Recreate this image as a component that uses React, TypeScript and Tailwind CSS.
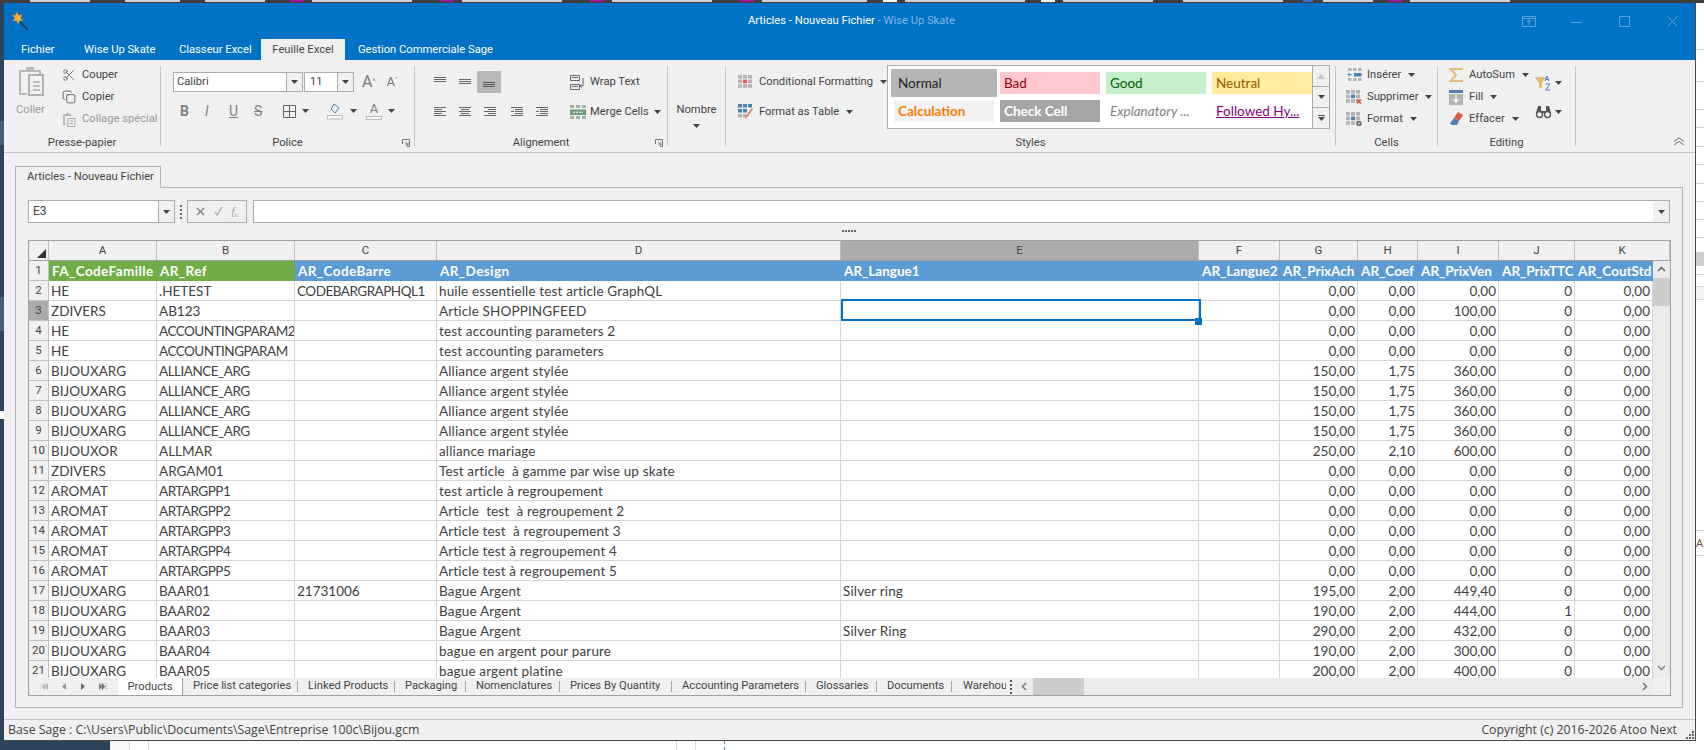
import { Copy, Scissors } from "lucide-react";
import type { ReactNode } from "react";

const ui = "font-['Roboto',sans-serif]";
const cellFont = "font-['Lato',sans-serif]";

const colsHead = "grid grid-cols-[20px_108px_138px_142px_404px_358px_81px_78px_60px_81px_76px_95px]";
const colsBody = "grid grid-cols-[20px_108px_138px_142px_404px_358px_81px_78px_60px_81px_76px_78px]";

const columnLetters = ["A", "B", "C", "D", "E", "F", "G", "H", "I", "J", "K"];
const fieldNames = [
  "FA_CodeFamille", "AR_Ref", "AR_CodeBarre", "AR_Design", "AR_Langue1", "AR_Langue2",
  "AR_PrixAch", "AR_Coef", "AR_PrixVen", "AR_PrixTTC", "AR_CoutStd",
];

const rows = [
  ["HE", ".HETEST", "CODEBARGRAPHQL1", "huile essentielle test article GraphQL", "", "", "0,00", "0,00", "0,00", "0", "0,00"],
  ["ZDIVERS", "AB123", "", "Article SHOPPINGFEED", "", "", "0,00", "0,00", "100,00", "0", "0,00"],
  ["HE", "ACCOUNTINGPARAM2", "", "test accounting parameters 2", "", "", "0,00", "0,00", "0,00", "0", "0,00"],
  ["HE", "ACCOUNTINGPARAM", "", "test accounting parameters", "", "", "0,00", "0,00", "0,00", "0", "0,00"],
  ["BIJOUXARG", "ALLIANCE_ARG", "", "Alliance argent stylée", "", "", "150,00", "1,75", "360,00", "0", "0,00"],
  ["BIJOUXARG", "ALLIANCE_ARG", "", "Alliance argent stylée", "", "", "150,00", "1,75", "360,00", "0", "0,00"],
  ["BIJOUXARG", "ALLIANCE_ARG", "", "Alliance argent stylée", "", "", "150,00", "1,75", "360,00", "0", "0,00"],
  ["BIJOUXARG", "ALLIANCE_ARG", "", "Alliance argent stylée", "", "", "150,00", "1,75", "360,00", "0", "0,00"],
  ["BIJOUXOR", "ALLMAR", "", "alliance mariage", "", "", "250,00", "2,10", "600,00", "0", "0,00"],
  ["ZDIVERS", "ARGAM01", "", "Test article  à gamme par wise up skate", "", "", "0,00", "0,00", "0,00", "0", "0,00"],
  ["AROMAT", "ARTARGPP1", "", "test article à regroupement", "", "", "0,00", "0,00", "0,00", "0", "0,00"],
  ["AROMAT", "ARTARGPP2", "", "Article  test  à regroupement 2", "", "", "0,00", "0,00", "0,00", "0", "0,00"],
  ["AROMAT", "ARTARGPP3", "", "Article test  à regroupement 3", "", "", "0,00", "0,00", "0,00", "0", "0,00"],
  ["AROMAT", "ARTARGPP4", "", "Article test à regroupement 4", "", "", "0,00", "0,00", "0,00", "0", "0,00"],
  ["AROMAT", "ARTARGPP5", "", "Article test à regroupement 5", "", "", "0,00", "0,00", "0,00", "0", "0,00"],
  ["BIJOUXARG", "BAAR01", "21731006", "Bague Argent", "Silver ring", "", "195,00", "2,00", "449,40", "0", "0,00"],
  ["BIJOUXARG", "BAAR02", "", "Bague Argent", "", "", "190,00", "2,00", "444,00", "1", "0,00"],
  ["BIJOUXARG", "BAAR03", "", "Bague Argent", "Silver Ring", "", "290,00", "2,00", "432,00", "0", "0,00"],
  ["BIJOUXARG", "BAAR04", "", "bague en argent pour parure", "", "", "190,00", "2,00", "300,00", "0", "0,00"],
  ["BIJOUXARG", "BAAR05", "", "bague argent platine", "", "", "200,00", "2,00", "400,00", "0", "0,00"],
];

const sheetTabs = [
  { name: "Price list categories", w: "w-[115px]" },
  { name: "Linked Products", w: "w-[97px]" },
  { name: "Packaging", w: "w-[71px]" },
  { name: "Nomenclatures", w: "w-[94px]" },
  { name: "Prices By Quantity", w: "w-[112px]" },
  { name: "Accounting Parameters", w: "w-[134px]" },
  { name: "Glossaries", w: "w-[71px]" },
  { name: "Documents", w: "w-[75px]" },
];

// bits of the windows behind the app, peeking out round the edges
const taskbarBits = [
  { x: "ml-[30px] w-[60px] bg-[#cfcfcf]" },
  { x: "ml-[35px] w-[55px] bg-[#cfcfcf]" },
  { x: "ml-[25px] w-[60px] bg-[#cfcfcf]" },
  { x: "ml-[25px] w-[14px] bg-[#a01a9a]" },
  { x: "ml-[8px] w-[100px] bg-[#cfcfcf]" },
  { x: "ml-[28px] w-[14px] bg-[#a01a9a]" },
  { x: "ml-[8px] w-[100px] bg-[#cfcfcf]" },
  { x: "ml-[28px] w-[14px] bg-[#a01a9a]" },
  { x: "ml-[8px] w-[100px] bg-[#cfcfcf]" },
  { x: "ml-[28px] w-[14px] bg-[#a01a9a]" },
  { x: "ml-[8px] w-[105px] bg-[#cfcfcf]" },
  { x: "ml-[16px] w-[14px] bg-white" },
  { x: "ml-[8px] w-[120px] bg-[#cfcfcf]" },
  { x: "ml-[16px] w-[14px] bg-white" },
  { x: "ml-[8px] w-[90px] bg-[#cfcfcf]" },
  { x: "ml-[30px] w-[100px] bg-[#cfcfcf]" },
  { x: "ml-[20px] w-[10px] bg-[#3a6fd8]" },
  { x: "ml-[10px] w-[50px] bg-[#cfcfcf]" },
  { x: "ml-[15px] w-[14px] bg-[#a01a9a]" },
  { x: "ml-[8px] w-[100px] bg-[#cfcfcf]" },
];

const sideLines = ["h-[47px]", "h-[32px]", "h-[28px]", "h-[18px]", "h-[19px]", "h-[18px]", "h-[19px]", "h-[18px]", "h-[18px]", "h-[18px]"];

function Caret({ className = "" }: { className?: string }) {
  return (
    <svg width="7" height="4" viewBox="0 0 7 4" className={`shrink-0 ${className}`}>
      <path d="M0 0h7L3.5 4z" fill="#444" />
    </svg>
  );
}

function Lines({ rows, active }: { rows: number[][]; active?: boolean }) {
  return (
    <svg width="14" height="14" viewBox="0 0 14 14">
      {rows.map(([y, x1, x2], i) => (
        <rect key={i} x={x1} y={y} width={x2 - x1} height="1" fill={active ? "#555" : "#666"} />
      ))}
    </svg>
  );
}

function GridIcon({ tint, extra }: { tint: string; extra?: ReactNode }) {
  const cells = [0, 1, 2].flatMap((r) => [0, 1, 2].map((c) => [r, c]));
  return (
    <svg width="16" height="14" viewBox="0 0 16 14" className="shrink-0">
      {cells.map(([r, c]) => (
        <rect key={`${r}${c}`} x={c * 5} y={r * 4.6} width="4" height="3.6" fill={r === 1 && c === 1 ? tint : "#b3b3b3"} />
      ))}
      {extra}
    </svg>
  );
}

function SmallBtn({ icon, label, caret, muted }: { icon: ReactNode; label: string; caret?: boolean; muted?: boolean }) {
  return (
    <div className={`flex h-[18px] items-center gap-[5px] whitespace-nowrap ${muted ? "text-[#9a9a9a]" : "text-[#444]"}`}>
      <span className="flex w-[16px] shrink-0 justify-center">{icon}</span>
      <span>{label}</span>
      {caret && <Caret className="ml-[2px]" />}
    </div>
  );
}

function Group({ w, label, launcher, children }: { w: string; label: string; launcher?: boolean; children: ReactNode }) {
  return (
    <div className={`relative h-[80px] shrink-0 border-r border-[#c6c6c6] ${w}`}>
      <div className="flex h-[70px]">{children}</div>
      <div className="h-[14px] text-center leading-[14px] whitespace-nowrap text-[#444]">{label}</div>
      {launcher && (
        <svg width="8" height="8" viewBox="0 0 8 8" className="absolute right-[4px] bottom-[-1px]">
          <path d="M0.5 5V0.5H7.5V7.5H5M3 3l3 3M6 3.5V6H3.5" fill="none" stroke="#777" />
        </svg>
      )}
    </div>
  );
}

function WindowButtons() {
  return (
    <div className="flex items-center text-[#5ca4dc]">
      <svg width="14" height="11" viewBox="0 0 14 11" className="mr-[35px]">
        <path d="M.5.5h13v10H.5zM.5 2.5h13M7 9V4M4.8 6 7 3.8 9.2 6" fill="none" stroke="currentColor" />
      </svg>
      <svg width="11" height="11" viewBox="0 0 11 11" className="mr-[37px]">
        <path d="M0 6.5h11" stroke="currentColor" />
      </svg>
      <svg width="11" height="11" viewBox="0 0 11 11" className="mr-[37px]">
        <path d="M.5.5h10v10H.5z" fill="none" stroke="currentColor" />
      </svg>
      <svg width="11" height="11" viewBox="0 0 11 11">
        <path d="M.5.5l10 10M10.5.5l-10 10" stroke="currentColor" />
      </svg>
    </div>
  );
}

function Ribbon() {
  return (
    <div className={`relative flex h-[93px] shrink-0 border-b border-[#c6c6c6] bg-[#f0f0f0] pt-[6px] text-[11.2px] ${ui}`}>
      <Group w="w-[157px]" label="Presse-papier">
        <div className="flex w-[57px] shrink-0 flex-col pl-[14px] text-[#9a9a9a]">
          <svg width="28" height="30" viewBox="0 0 28 30">
            <path d="M1 4h7V1h8v3h7v5h-2V6H3v21h6v2H1z" fill="#b8b8b8" />
            <path d="M11 9h14v20H11z" fill="#f0f0f0" stroke="#b0b0b0" strokeWidth="2" />
            <path d="M15 16h7M15 20h7M15 24h7" stroke="#b0b0b0" strokeWidth="1.5" />
          </svg>
          <span className="mt-[6px] -ml-[2px]">Coller</span>
        </div>
        <div className="flex flex-col gap-[4px]">
          <SmallBtn icon={<Scissors size={14} strokeWidth={1.3} color="#555" />} label="Couper" />
          <SmallBtn icon={<Copy size={14} strokeWidth={1.3} color="#444" />} label="Copier" />
          <SmallBtn
            muted
            label="Collage spécial"
            icon={
              <svg width="14" height="15" viewBox="0 0 14 15">
                <path d="M1 2h3V1h3v1h2v2H3v8h2v1H1z" fill="#bbb" />
                <path d="M6 6.5h7v8H6zM8 9h3M8 11.5h3" fill="none" stroke="#aaa" />
              </svg>
            }
          />
        </div>
      </Group>

      <Group w="w-[254px]" label="Police" launcher>
        <div className="flex flex-col pt-[6px] pl-[12px]">
          <div className="flex h-[20px] items-center">
            <div className="flex h-full w-[130px] border border-[#ababab]">
              <span className="flex-1 bg-white pl-[3px] leading-[18px] text-[#444]">Calibri</span>
              <span className="flex w-[16px] items-center justify-center border-l border-[#ababab]"><Caret /></span>
            </div>
            <div className="ml-[1px] flex h-full w-[50px] border border-[#ababab]">
              <span className="flex-1 bg-white pl-[5px] leading-[18px] text-[#444]">11</span>
              <span className="flex w-[16px] items-center justify-center border-l border-[#ababab]"><Caret /></span>
            </div>
            <span className="ml-[8px] text-[16px] text-[#777]">A<sup className="text-[7px] text-[#4a86c5]">^</sup></span>
            <span className="ml-[11px] text-[13px] text-[#777]">A<sup className="text-[7px] text-[#4a86c5]">ˇ</sup></span>
          </div>
          <div className="mt-[9px] flex h-[20px] items-center text-[14px] text-[#808080]">
            <span className="ml-[7px] w-[25px] font-bold">B</span>
            <span className="w-[24px] italic">I</span>
            <span className="w-[25px] underline">U</span>
            <span className="w-[29px] line-through">S</span>
            <svg width="13" height="13" viewBox="0 0 13 13">
              <path d="M.5.5h12v12H.5zM6.5.5v12M.5 6.5h12" fill="none" stroke="#666" />
            </svg>
            <Caret className="ml-[6px]" />
            <svg width="16" height="17" viewBox="0 0 16 17" className="ml-[18px]">
              <path d="M7 1l5 4-4 5-4-4z" fill="#e8eef6" stroke="#5a7fa8" />
              <rect x=".5" y="12.5" width="15" height="3.5" fill="#f6f6f6" stroke="#bbb" />
            </svg>
            <Caret className="ml-[7px]" />
            <span className="relative ml-[9px] flex h-[18px] w-[16px] flex-col items-center text-[13px] leading-[13px]">
              A
              <span className="absolute bottom-0 h-[4px] w-full border border-[#bbb] bg-[#f6f6f6]" />
            </span>
            <Caret className="ml-[6px]" />
          </div>
        </div>
      </Group>

      <Group w="w-[253px]" label="Alignement" launcher>
        <div className="flex w-[155px] shrink-0 flex-col pt-[5px] pl-[12px]">
          <div className="flex h-[22px] items-center">
            <span className="flex w-[25px] justify-center"><Lines rows={[[2, 1, 13], [4, 1, 13], [6, 1, 13]]} /></span>
            <span className="flex w-[25px] justify-center"><Lines rows={[[4, 1, 13], [6, 1, 13], [8, 1, 13]]} /></span>
            <span className="flex h-[22px] w-[24px] items-center justify-center bg-[#b8b8b8]"><Lines active rows={[[7, 1, 13], [9, 1, 13], [11, 1, 13]]} /></span>
          </div>
          <div className="mt-[8px] flex h-[22px] items-center">
            <span className="flex w-[25px] justify-center"><Lines rows={[[2, 1, 13], [4, 1, 9], [6, 1, 13], [8, 1, 9], [10, 1, 13]]} /></span>
            <span className="flex w-[25px] justify-center"><Lines rows={[[2, 1, 13], [4, 3, 11], [6, 1, 13], [8, 3, 11], [10, 1, 13]]} /></span>
            <span className="flex w-[25px] justify-center"><Lines rows={[[2, 1, 13], [4, 5, 13], [6, 1, 13], [8, 5, 13], [10, 1, 13]]} /></span>
            <span className="flex w-[30px] justify-center"><Lines rows={[[2, 1, 13], [4, 5, 13], [6, 1, 4], [6, 5, 13], [8, 5, 13], [10, 1, 13]]} /></span>
            <span className="flex w-[20px] justify-center"><Lines rows={[[2, 1, 13], [4, 5, 13], [6, 1, 4], [6, 5, 13], [8, 5, 13], [10, 1, 13]]} /></span>
          </div>
        </div>
        <div className="flex flex-col pt-[7px] text-[#444]">
          <div className="flex h-[18px] items-center gap-[5px] whitespace-nowrap">
            <svg width="15" height="17" viewBox="0 0 15 17">
              <path d="M.5 1.5h9v5h-9zM.5 10.5h9v5h-9zM2 3.5h6M2 12.5h6M13 4v8l-3 0M11.5 10.5 10 12l1.5 1.5" fill="none" stroke="#666" />
            </svg>
            Wrap Text
          </div>
          <div className="mt-[12px] flex h-[18px] items-center gap-[3px] whitespace-nowrap">
            <svg width="17" height="15" viewBox="0 0 17 15">
              <path d="M0 0h4v3H0zM6 0h4v3H6zM12 0h4v3h-4zM0 11h4v3H0zM6 11h4v3H6zM12 11h4v3h-4z" fill="#9db5a3" />
              <rect y="4.5" width="16" height="5.5" fill="#6d9c7c" />
              <path d="M3 7.2h10" stroke="#fff" strokeDasharray="2 1" />
            </svg>
            Merge Cells
            <Caret className="ml-[2px]" />
          </div>
        </div>
      </Group>

      <Group w="w-[58px]" label="">
        <div className="flex w-full flex-col items-center pt-[36px] text-[#444]">
          <span>Nombre</span>
          <Caret className="mt-[5px]" />
        </div>
      </Group>

      <Group w="w-[610px]" label="Styles">
        <div className="flex w-[161px] shrink-0 flex-col pt-[7px] pl-[12px] text-[#444]">
          <div className="flex h-[18px] items-center gap-[5px] whitespace-nowrap">
            <GridIcon tint="#e0633f" />
            Conditional Formatting
            <Caret className="ml-[2px]" />
          </div>
          <div className="mt-[12px] flex h-[18px] items-center gap-[5px] whitespace-nowrap">
            <svg width="16" height="16" viewBox="0 0 16 16" className="shrink-0">
              <path d="M0 0h4v3.5H0zM5 0h4v3.5H5zM10 0h4v3.5h-4zM0 5h4v3.5H0zM5 5h4v3.5H5z" fill="#4a7fb8" />
              <path d="M0 10h4v3.5H0zM5 10h3v3.5H5z" fill="#b3b3b3" />
              <path d="M15 5 9 13l-2 2 1-3 6-8z" fill="#e0633f" />
            </svg>
            Format as Table
            <Caret className="ml-[2px]" />
          </div>
        </div>
        <div className={`-mt-[1px] flex h-[64px] w-[443px] shrink-0 border border-[#ababab] bg-white ${cellFont} text-[13.5px]`}>
          <div className="grid flex-1 grid-cols-[100px_100px_100px_100px] grid-rows-[22px_22px] content-start gap-x-[6px] gap-y-[6px] pt-[6px] pl-[6px] leading-[22px]">
            <span className="bg-[#b5b5b5] pl-[4px] text-[#222] outline-[3px] outline-[#b5b5b5]">Normal</span>
            <span className="bg-[#ffc7ce] pl-[4px] text-[#9c0006]">Bad</span>
            <span className="bg-[#c6efce] pl-[4px] text-[#006100]">Good</span>
            <span className="bg-[#ffeb9c] pl-[4px] text-[#9c5700]">Neutral</span>
            <span className="bg-[#f2f2f2] pl-[4px] font-bold text-[#fa7d00]">Calculation</span>
            <span className="bg-[#a5a5a5] pl-[4px] font-bold text-white">Check Cell</span>
            <span className="pl-[4px] text-[#7f7f7f] italic">Explanatory ...</span>
            <span className="pl-[4px] text-[#800080] underline">Followed Hy...</span>
          </div>
          <div className="flex w-[17px] shrink-0 flex-col border-l border-[#ababab] bg-[#f0f0f0]">
            <span className="flex h-[21px] items-center justify-center border-b border-[#ababab]">
              <svg width="8" height="5" viewBox="0 0 8 5"><path d="M0 5h8L4 0z" fill="#c4c4c4" /></svg>
            </span>
            <span className="flex h-[21px] items-center justify-center border-b border-[#ababab]"><Caret /></span>
            <span className="flex flex-1 flex-col items-center justify-center gap-[1px]">
              <span className="h-[1px] w-[7px] bg-[#555]" />
              <Caret />
            </span>
          </div>
        </div>
      </Group>

      <Group w="w-[102px]" label="Cells">
        <div className="flex flex-col gap-[4px] pl-[10px]">
          <SmallBtn
            caret
            label="Insérer"
            icon={
              <svg width="15" height="14" viewBox="0 0 15 14">
                <path d="M1 0h3.500v3H1zM6 0h3.500v3H6zM11 0h3.500v3H11zM1 10h3.500v3H1zM6 10h3.500v3H6zM11 10h3.500v3H11z" fill="#b3b3b3" />
                <path d="M7 5h7.500v3.500H7z" fill="#4a7fb8" />
                <path d="M1 6.700h4M2.700 5 1 6.700l1.700 1.700" fill="none" stroke="#4a7fb8" />
              </svg>
            }
          />
          <SmallBtn caret label="Supprimer" icon={<GridIcon tint="#4a7fb8" extra={<path d="M11 9.500l4 4M15 9.500l-4 4" stroke="#e0533f" strokeWidth="1.600" />} />} />
          <SmallBtn caret label="Format" icon={<GridIcon tint="#4a7fb8" extra={<circle cx="13" cy="11.500" r="2" fill="none" stroke="#666" strokeWidth="1.400" />} />} />
        </div>
      </Group>

      <Group w="w-[138px]" label="Editing">
        <div className="flex w-[97px] shrink-0 flex-col gap-[4px] pl-[10px]">
          <SmallBtn
            caret
            label="AutoSum"
            icon={<svg width="14" height="14" viewBox="0 0 14 14"><path d="M13 2V1H1.500L7 7l-5.500 6H13v-1" fill="none" stroke="#e9b872" strokeWidth="2" /></svg>}
          />
          <SmallBtn
            caret
            label="Fill"
            icon={
              <svg width="14" height="15" viewBox="0 0 14 15">
                <path d="M0 0h14v3H0z" fill="#4a7fb8" />
                <path d="M0 4h14v11H0z" fill="#b3b3b3" />
                <path d="M7 5v7M4.500 9.500 7 12l2.500-2.500" fill="none" stroke="#fff" strokeWidth="1.300" />
              </svg>
            }
          />
          <SmallBtn
            caret
            label="Effacer"
            icon={
              <svg width="15" height="14" viewBox="0 0 15 14">
                <path d="M9 0l5 3-4 6-5-3z" fill="#e0533f" />
                <path d="M5 6l5 3-2 4H3L1 11z" fill="#4a7fb8" />
              </svg>
            }
          />
        </div>
        <div className="flex flex-col pt-[8px]">
          <div className="flex h-[18px] items-center gap-[3px]">
            <svg width="17" height="17" viewBox="0 0 17 17">
              <path d="M0 2h11L7 8v6L4 12V8z" fill="#e9b872" />
              <path d="M10 6l2-5 2 5M11 4.500h2.500M10.500 9h4.500l-4.500 6H15" fill="none" stroke="#4a7fb8" />
            </svg>
            <Caret />
          </div>
          <div className="mt-[12px] flex h-[16px] items-center gap-[3px]">
            <svg width="17" height="14" viewBox="0 0 17 14">
              <path d="M3 1h3v5h5V1h3l2 7H1z" fill="#555" />
              <circle cx="4.500" cy="9.500" r="3" fill="#f0f0f0" stroke="#555" strokeWidth="1.400" />
              <circle cx="12.500" cy="9.500" r="3" fill="#f0f0f0" stroke="#555" strokeWidth="1.400" />
            </svg>
            <Caret />
          </div>
        </div>
      </Group>

      <svg width="12" height="9" viewBox="0 0 12 9" className="absolute top-[77px] right-[10px]">
        <path d="M1 4.500 6 1l5 3.500M1 8 6 4.500 11 8" fill="none" stroke="#666" />
      </svg>
    </div>
  );
}

function FormulaBar() {
  return (
    <div className={`flex h-[23px] items-stretch pl-[12px] text-[12px] text-[#444] ${ui}`}>
      <div className="flex w-[147px] border border-[#ababab] bg-white">
        <span className="flex-1 pl-[4px] leading-[21px]">E3</span>
        <span className="flex w-[16px] items-center justify-center border-l border-[#ababab] bg-[#f0f0f0]"><Caret /></span>
      </div>
      <div className="flex w-[12px] flex-col items-center justify-center gap-[2px]">
        <span className="size-[2px] bg-[#666]" />
        <span className="size-[2px] bg-[#666]" />
        <span className="size-[2px] bg-[#666]" />
        <span className="size-[2px] bg-[#666]" />
      </div>
      <div className="flex w-[60px] items-center justify-around border border-[#ababab] bg-[#f0f0f0] px-[4px] text-[#9a9a9a]">
        <svg width="9" height="9" viewBox="0 0 9 9"><path d="M1 1l7 7M8 1 1 8" stroke="#8e8e8e" strokeWidth="1.700" /></svg>
        <svg width="9" height="9" viewBox="0 0 9 9"><path d="M1 5l2 3 5-8" fill="none" stroke="#aaa" strokeWidth="1.300" /></svg>
        <span className="font-['Liberation_Serif',serif] text-[11px] italic">f<sub className="text-[7px]">x</sub></span>
      </div>
      <div className="ml-[6px] flex w-[1417px] border border-[#ababab] bg-white">
        <span className="flex-1" />
        <span className="flex w-[16px] items-center justify-center bg-[#f0f0f0]"><Caret /></span>
      </div>
    </div>
  );
}

function Sheet() {
  return (
    <div className="ml-[12px] flex h-[456px] w-[1643px] flex-col border border-[#a0a0a0] bg-white">
      <div className={`${colsHead} h-[20px] shrink-0 border-b border-[#a0a0a0] bg-[#f0f0f0] text-center text-[11.5px] leading-[19px] text-[#444] ${ui}`}>
        <div className="relative border-r border-[#c0c0c0]">
          <svg width="9" height="9" viewBox="0 0 9 9" className="absolute right-[2px] bottom-[2px]"><path d="M9 0v9H0z" fill="#333" /></svg>
        </div>
        {columnLetters.map((c) => (
          <div key={c} className={`border-r border-[#c0c0c0] ${c === "E" ? "bg-[#ababab]" : ""}`}>{c}</div>
        ))}
      </div>

      <div className="flex min-h-0 flex-1">
        <div className={`relative min-w-0 flex-1 overflow-hidden text-[13.5px] leading-[21px] text-[#404040] ${cellFont}`}>
          <div className={`${colsBody} h-[20px]`}>
            <div className={`border-r border-b border-[#c0c0c0] bg-[#f0f0f0] text-center text-[11.5px] leading-[19px] text-[#444] ${ui}`}>1</div>
            {fieldNames.map((f, i) => (
              <div key={f} className={`overflow-hidden pl-[3px] font-bold whitespace-nowrap text-white ${i < 2 ? "bg-[#70ad47]" : "bg-[#5b9bd5]"} ${i < 4 ? "tracking-[0.4px]" : ""}`}>{f}</div>
            ))}
          </div>
          {rows.map((row, r) => (
            <div key={r} className={`${colsBody} h-[20px]`}>
              <div className={`border-r border-b border-[#c0c0c0] text-center text-[11.5px] leading-[19px] text-[#444] ${ui} ${r === 1 ? "bg-[#ababab]" : "bg-[#f0f0f0]"}`}>{r + 2}</div>
              {row.map((v, c) => (
                <div
                  key={c}
                  className={`overflow-hidden border-r border-b border-[#d4d4d4] whitespace-pre ${c >= 6 ? "pr-[2px] text-right" : "pl-[2px]"} ${c === 3 || c === 4 ? "tracking-[0.15px]" : ""} ${(c === 1 || c === 2) && v.length > 8 ? "tracking-[-0.5px]" : ""}`}
                >
                  {v}
                </div>
              ))}
            </div>
          ))}
          {/* selected cell E3 */}
          <div className="absolute top-[38px] left-[812px] h-[22px] w-[360px] border-2 border-[#0072c6]" />
          <div className="absolute top-[57px] left-[1166px] size-[7px] bg-[#0072c6]" />
        </div>
        <div className="flex w-[17px] shrink-0 flex-col items-center bg-[#ebebeb]">
          <svg width="17" height="17" viewBox="0 0 17 17" className="shrink-0"><path d="M5 10l3.500-3.500L12 10" fill="none" stroke="#666" strokeWidth="1.500" /></svg>
          <div className="h-[28px] w-full bg-[#cdcdcd]" />
          <svg width="17" height="17" viewBox="0 0 17 17" className="mt-auto mb-[2px] shrink-0"><path d="M5 7l3.500 3.500L12 7" fill="none" stroke="#888" strokeWidth="1.500" /></svg>
        </div>
      </div>

      <div className={`flex h-[17px] shrink-0 items-center bg-[#f0f0f0] text-[11.2px] text-[#444] ${ui}`}>
        <div className="flex w-[89px] shrink-0 items-center justify-around px-[4px] text-[#888]">
          <svg width="8" height="7" viewBox="0 0 8 7"><path d="M1 0v7M5 0 2 3.500 5 7zM8 0 5 3.500 8 7z" fill="#bbb" stroke="#bbb" strokeWidth=".4" /></svg>
          <svg width="4" height="7" viewBox="0 0 4 7"><path d="M4 0 0 3.500 4 7z" fill="#999" /></svg>
          <svg width="4" height="7" viewBox="0 0 4 7"><path d="M0 0l4 3.500L0 7z" fill="#666" /></svg>
          <svg width="8" height="7" viewBox="0 0 8 7"><path d="M7 0v7M3 0l3 3.500L3 7zM0 0l3 3.500L0 7z" fill="#777" stroke="#777" strokeWidth=".4" /></svg>
        </div>
        <div className="flex h-full w-[65px] shrink-0 items-center justify-center border-r border-[#a0a0a0] bg-white leading-[16px]">Products</div>
        {sheetTabs.map((t) => (
          <div key={t.name} className="flex h-full shrink-0 items-center">
            <div className={`${t.w} pl-[10px] whitespace-nowrap`}>{t.name}</div>
            <span className="-ml-[1px] h-[11px] w-px bg-[#a8a8a8]" />
          </div>
        ))}
        <div className="w-[54px] shrink-0 overflow-hidden pl-[11px] whitespace-nowrap">Warehouses</div>
        <div className="flex w-[10px] shrink-0 flex-col items-center gap-[2px]">
          <span className="size-[2px] bg-[#555]" />
          <span className="size-[2px] bg-[#555]" />
          <span className="size-[2px] bg-[#555]" />
          <span className="size-[2px] bg-[#555]" />
        </div>
        <div className="flex h-full flex-1 items-center bg-[#ebebeb]">
          <svg width="17" height="17" viewBox="0 0 17 17" className="shrink-0"><path d="M10 5 6.500 8.500 10 12" fill="none" stroke="#777" strokeWidth="1.500" /></svg>
          <div className="h-full w-[51px] bg-[#cdcdcd]" />
          <svg width="17" height="17" viewBox="0 0 17 17" className="ml-auto shrink-0"><path d="M7 5l3.500 3.500L7 12" fill="none" stroke="#777" strokeWidth="1.500" /></svg>
        </div>
        <div className="h-full w-[17px] shrink-0 bg-[#f0f0f0]" />
      </div>
    </div>
  );
}

export default function App() {
  return (
    <div className="flex h-[750px] w-[1704px] flex-col overflow-hidden bg-white">
      <div className="flex h-[3px] shrink-0 overflow-hidden bg-[#3f3f3f]">
        {taskbarBits.map((b, i) => (
          <span key={i} className={`h-[2px] shrink-0 ${b.x}`} />
        ))}
      </div>
      <div className="flex h-[738px] shrink-0">
        <div className="flex w-[4px] shrink-0 flex-col bg-[#2d435c]">
          <div className="mt-[118px] h-[24px] bg-[#44607f]" />
          <div className="mt-[152px] h-[34px] bg-[#44607f]" />
          <div className="mt-[80px] h-[8px] bg-white" />
        </div>
        <div className="flex w-[1692px] shrink-0 flex-col border-r border-b border-[#4a4a4a] bg-[#f0f0f0]">
          {/* title bar */}
          <div className={`flex h-[57px] shrink-0 flex-col bg-[#0072c6] text-[11.2px] ${ui}`}>
            <div className="flex h-[36px] items-center pr-[17px] pl-[6px]">
              <svg width="20" height="20" viewBox="0 0 20 20" className="shrink-0">
                <path d="M10 11l8 8" stroke="#333" strokeWidth="1.500" />
                <path d="M7 1l1.500 3.500L12 3.500 10.500 7 13 9.500 9.500 9.500 8 13 6.500 9.500 3 10l2-3L2.500 4l3 .5z" fill="#f5b335" stroke="#e08a1a" strokeWidth=".5" />
              </svg>
              <div className="flex-1 pl-[718px] whitespace-nowrap text-white">
                Articles - Nouveau Fichier <span className="text-[#7fb8e6]">- Wise Up Skate</span>
              </div>
              <WindowButtons />
            </div>
            <div className="flex h-[21px] items-stretch pl-[5px] leading-[22px] text-white">
              <span className="w-[67px] pl-[12px]">Fichier</span>
              <span className="w-[95px] pl-[8px]">Wise Up Skate</span>
              <span className="w-[90px] pl-[8px]">Classeur Excel</span>
              <span className="w-[84px] bg-[#f0f0f0] text-center text-[#444]">Feuille Excel</span>
              <span className="pl-[13px]">Gestion Commerciale Sage</span>
            </div>
          </div>

          <Ribbon />

          {/* document area */}
          <div className="flex min-h-0 flex-1 flex-col pt-[13px] pl-[11px]">
            <div className={`z-10 -mb-px h-[22px] w-[146px] border border-b-0 border-[#b4b4b4] bg-[#f0f0f0] pl-[11px] text-[11.2px] leading-[20px] whitespace-nowrap text-[#444] ${ui}`}>
              Articles - Nouveau Fichier
            </div>
            <div className="flex h-[521px] w-[1668px] flex-col border border-[#b4b4b4] pt-[12px]">
              <FormulaBar />
              <div className="flex h-[17px] items-center justify-center gap-[1px] pb-[1px]">
                {[0, 1, 2, 3, 4].map((i) => (
                  <span key={i} className="size-[2px] bg-[#666]" />
                ))}
              </div>
              <Sheet />
            </div>
          </div>

          {/* status bar */}
          <div className="relative flex h-[21px] shrink-0 items-center justify-between border-t border-[#c6c6c6] pr-[18px] pl-[4px] font-['Open_Sans',sans-serif] text-[12.3px] text-[#444]">
            <span>Base Sage : C:\Users\Public\Documents\Sage\Entreprise 100c\Bijou.gcm</span>
            <span>Copyright (c) 2016-2026 Atoo Next</span>
            <svg width="9" height="9" viewBox="0 0 9 9" className="absolute right-[1px] bottom-[1px]">
              <path d="M7 1h2v2H7zM4 4h2v2H4zM7 4h2v2H7zM1 7h2v2H1zM4 7h2v2H4zM7 7h2v2H7z" fill="#666" />
            </svg>
          </div>
        </div>
        {/* other window behind, right side */}
        <div className="flex-1 overflow-hidden bg-white">
          {sideLines.map((h, i) => (
            <div key={i} className={`border-b border-[#d0d0d0] ${h}`} />
          ))}
          <div className="mt-[14px] h-[14px] bg-[#cfcfcf]" />
          <div className="h-[9px] border-b border-[#d8d8d8]" />
          <div className="h-[12px] border-b border-[#d8d8d8]" />
          <div className="h-[13px] border-b border-[#d8d8d8] bg-[#f4f4f4]" />
          <div className="mt-[230px] h-[26px] border-y border-[#cfcfcf] text-[11px] leading-[24px] text-[#555]">AR</div>
        </div>
      </div>
      <div className="flex h-[9px] shrink-0">
        <div className="w-[110px] shrink-0 bg-[#2d435c]" />
        <div className="w-[20px] shrink-0 border-r border-[#d8d8d8] bg-[#f6f6f6]" />
        <div className="w-[19px] shrink-0 border-r border-[#d8d8d8]" />
        <div className="w-[528px] shrink-0 border-r border-[#d8d8d8]" />
        <div className="w-[19px] shrink-0 border-r border-[#d8d8d8]" />
        <div className="w-[29px] shrink-0 border-r border-dashed border-[#3a7fd0]" />
        <div className="flex-1 bg-white" />
      </div>
    </div>
  );
}
